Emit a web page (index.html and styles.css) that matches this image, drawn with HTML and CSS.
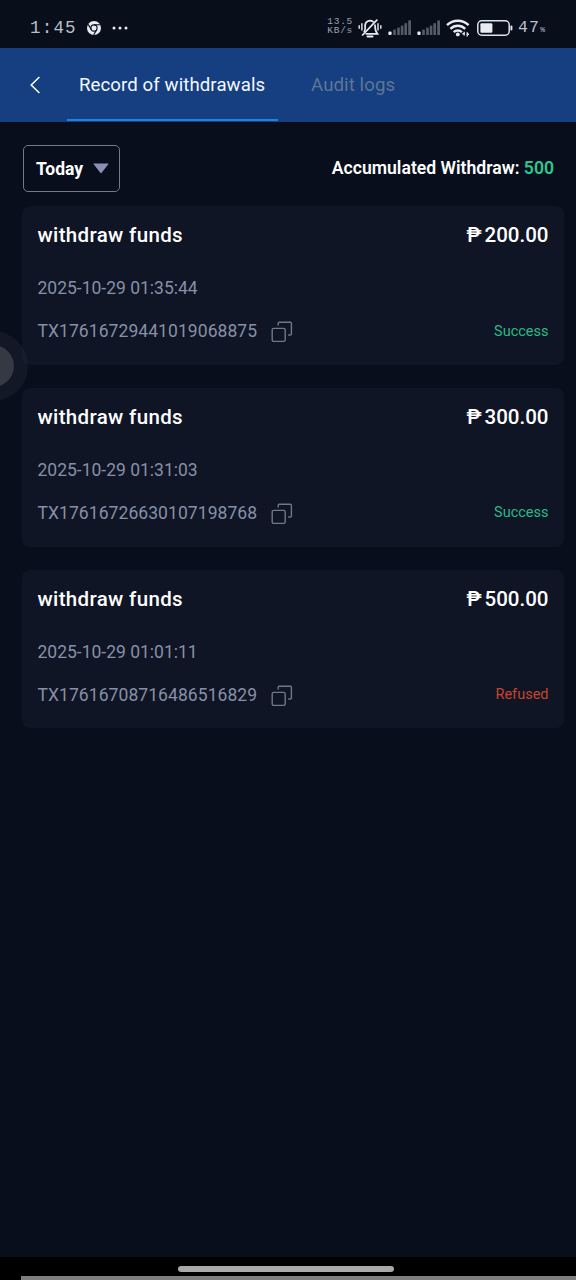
FILE: index.html
```html
<!DOCTYPE html>
<html lang="en">
<head>
<meta charset="utf-8">
<meta name="viewport" content="width=device-width, initial-scale=1">
<title>Record of withdrawals</title>
<link rel="stylesheet" href="styles.css">
</head>
<body>
<svg class="defs" aria-hidden="true">
  <symbol id="copy" viewBox="0 0 22 22"><g fill="none" stroke="currentColor" stroke-width="1.4"><rect x="1.2" y="7.4" width="13" height="13" rx="1.4"/><path d="M7.2 4.6V2.2a1 1 0 0 1 1-1H19.4a1 1 0 0 1 1 1V13a1 1 0 0 1-1 1H17.2"/></g></symbol>
  <symbol id="signal" viewBox="0 0 24 16"><rect x="0.4" y="11.4" width="3.2" height="3.6" rx="1" fill="#e8ebf2"/><g fill="#555b68"><rect x="5.2" y="9.6" width="2.6" height="5.4"/><rect x="9.2" y="7.6" width="2.6" height="7.4"/><rect x="12.8" y="5.6" width="2.6" height="9.4"/><rect x="16.4" y="3.2" width="2.6" height="11.8"/><rect x="20.2" y="0.4" width="2.8" height="14.6"/></g></symbol>
</svg>
<div class="phone">
  <header class="status">
    <div class="status-left">
      <span class="clock">1:45</span>
      <svg class="chrome" viewBox="0 0 14 14"><circle cx="7" cy="7" r="7" fill="#e8ebf2"/><circle cx="7" cy="7" r="3.1" fill="none" stroke="#090e1b" stroke-width="1.1"/><path d="M7 3.8H13.2M4.3 8.6 1.2 3.4M9.8 8.6 6.7 13.8" stroke="#090e1b" stroke-width="1.1"/></svg>
      <svg class="dots" viewBox="0 0 16 4" fill="#e8ebf2"><circle cx="2" cy="2" r="1.5"/><circle cx="8" cy="2" r="1.5"/><circle cx="14" cy="2" r="1.5"/></svg>
    </div>
    <div class="status-right">
      <div class="speed"><span>13.5</span><span>KB/s</span></div>
      <svg class="bell" viewBox="0 0 24 20" fill="none" stroke="#e8ebf2" stroke-width="1.7" stroke-linecap="round"><path d="M6.2 13.6C7.6 12 7.1 10.6 7.1 8a5 5 0 0 1 8-4.3M17 7.2c0 3.4-.1 5.6 2.4 8.6H8.2"/><path d="M4.6 17 18.8 2.2"/><path d="M9.5 18.4h5" stroke-width="2"/><path d="M1.2 7.8v2.4M3.9 5.8v6.2M20 5.8v6.2M22.8 7.8v2.4" stroke-width="1.4"/></svg>
      <svg class="signal"><use href="#signal"/></svg>
      <svg class="signal second"><use href="#signal"/></svg>
      <svg class="wifi" viewBox="0 0 24 18" fill="none" stroke="#e8ebf2" stroke-width="2.4"><path d="M1 6.2a15.5 15.5 0 0 1 21.6 0M4.4 9.8a10.6 10.6 0 0 1 14.8 0M7.7 13.2a5.8 5.8 0 0 1 8.2 0"/><circle cx="11.8" cy="15.4" r="1.9" fill="#e8ebf2" stroke="none"/><path d="M18.2 12.8v3.6M21.2 13.2v4.4" stroke-width="1.3"/><path d="M16.4 14.8h1.8M21.2 15.2h1.8" stroke-width="1.4"/></svg>
      <svg class="battery" viewBox="0 0 36 16"><rect x="0.8" y="0.8" width="31.4" height="14.4" rx="4" fill="none" stroke="#dfe3ec" stroke-width="1.5"/><rect x="3.4" y="3.2" width="12" height="9.6" rx="1" fill="#e8ebf2"/><rect x="33.4" y="5.4" width="2" height="5.2" rx="1" fill="#dfe3ec"/></svg>
      <span class="percent">47<small>%</small></span>
    </div>
  </header>

  <nav class="tabs">
    <svg class="back" viewBox="0 0 10 18" fill="none" stroke="#fff" stroke-width="1.5"><path d="M9.4 1 1.2 9l8.2 8"/></svg>
    <span class="tab active">Record of withdrawals</span>
    <span class="tab">Audit logs</span>
  </nav>

  <section class="filter">
    <div class="select"><span>Today</span><svg viewBox="0 0 16 11"><path d="M.9.4h14.2q.8 0 .4.7L8.7 9.8q-.7.9-1.4 0L.5 1.1Q.1.4.9.4Z" fill="#8b90b0"/></svg></div>
    <div class="total">Accumulated Withdraw: <b>500</b></div>
  </section>

  <main class="list">
    <article class="card">
      <div class="row title"><span class="name">withdraw funds</span><span class="amount"><i>₱</i>200.00</span></div>
      <div class="date">2025-10-29 01:35:44</div>
      <div class="row"><span class="tx">TX17616729441019068875<svg><use href="#copy"/></svg></span><span class="state">Success</span></div>
    </article>
    <article class="card">
      <div class="row title"><span class="name">withdraw funds</span><span class="amount"><i>₱</i>300.00</span></div>
      <div class="date">2025-10-29 01:31:03</div>
      <div class="row"><span class="tx">TX17616726630107198768<svg><use href="#copy"/></svg></span><span class="state">Success</span></div>
    </article>
    <article class="card">
      <div class="row title"><span class="name">withdraw funds</span><span class="amount"><i>₱</i>500.00</span></div>
      <div class="date">2025-10-29 01:01:11</div>
      <div class="row"><span class="tx">TX17616708716486516829<svg><use href="#copy"/></svg></span><span class="state refused">Refused</span></div>
    </article>
  </main>

  <footer class="gesture"><div class="pill"></div><div class="edge"></div></footer>
  <div class="assist"><div></div></div>
</div>
</body>
</html>
```
FILE: styles.css
```css
* { box-sizing: border-box; }
body { margin: 0; background: #080e1c; font-family: Roboto, "Liberation Sans", sans-serif; color: #fff; }
.defs { position: absolute; width: 0; height: 0; }
.phone { position: relative; width: 576px; height: 1280px; overflow: hidden; display: flex; flex-direction: column; }

.status { height: 48px; background: #090e1b; display: flex; justify-content: space-between; padding: 7px 31px 0 30px; }
.status-left, .status-right { display: flex; align-items: center; height: 41px; }
.clock, .percent { font-family: "Liberation Mono", monospace; font-size: 17.5px; letter-spacing: 1.2px; color: #b9bfcc; line-height: 20px; }
.chrome { width: 14px; height: 14px; margin-left: 10px; }
.dots { width: 16px; height: 4px; margin-left: 11px; }
.speed { display: flex; flex-direction: column; font: 9.5px/9.5px "Liberation Mono", monospace; letter-spacing: .7px; color: #9aa0ad; margin-top: -3px; }
.bell { width: 24px; height: 20px; margin-left: 5px; }
.signal { width: 24px; height: 16px; margin-left: 6px; }
.signal.second { margin-left: 5px; }
.wifi { width: 24px; height: 18px; margin-left: 5px; }
.battery { width: 36px; height: 16px; margin-left: 7px; }
.percent { margin: 2px 0 0 5px; font-size: 16.5px; }
.percent small { font-size: 8px; letter-spacing: 0; }

.tabs { height: 74px; background: #153f81; display: flex; align-items: stretch; padding-left: 30px; }
.back { width: 10px; height: 18px; margin: 28px 27px 0 0; }
.tab { font-size: 18.6px; line-height: 74px; height: 74px; padding: 0 12px; color: #5f7593; letter-spacing: .1px; margin-right: 21px; }
.tab.active { color: #f4f8ff; width: 211px; white-space: nowrap; background: linear-gradient(#1c83de, #1c83de) 0 71px / 100% 2px no-repeat; }

.filter { height: 84px; padding: 23px 22px 0 23px; display: flex; justify-content: space-between; align-items: flex-start; }
.select { width: 97px; height: 47px; border: 1px solid #747988; border-radius: 5px; display: flex; align-items: center; justify-content: space-between; padding: 0 10px 0 12px; font-weight: 700; font-size: 17.5px; }
.select svg { width: 16px; height: 11px; }
.total { font-size: 17.6px; font-weight: 600; line-height: 47px; }
.total b { font-weight: 600; color: #2cc692; }

.list { padding: 0 12px 0 22px; display: flex; flex-direction: column; gap: 23px; flex: 1; }
.card { height: 158.8px; background: #0f1525; border-radius: 8px; padding: 14px 15.5px 0; }
.row { display: flex; justify-content: space-between; align-items: center; height: 30px; }
.title { font-size: 20.5px; font-weight: 500; }
.name { letter-spacing: .35px; }
.amount { display: flex; }
.amount i { font-style: normal; margin-right: 3px; }
.date { margin-top: 23px; height: 30px; line-height: 30px; font-size: 17.5px; color: #8790a6; }
.date + .row { margin-top: 13px; }
.tx { display: flex; align-items: center; font-size: 17.5px; letter-spacing: .07px; color: #8790a6; }
.tx svg { width: 22px; height: 22px; margin: 2px 0 0 14px; color: #707787; }
.state { font-size: 14.5px; color: #2bb985; }
.state.refused { color: #c6442f; }

.gesture { height: 23px; background: #000; display: flex; flex-direction: column; align-items: center; justify-content: space-between; padding-top: 9px; }
.pill { width: 216px; height: 6px; border-radius: 3px; background: #a9a9a7; margin-right: 4px; }
.edge { width: 555px; height: 4px; background: #7e7e7e; align-self: flex-end; }

.assist { position: absolute; left: -42px; top: 331px; width: 70px; height: 70px; border-radius: 50%; background: rgba(40, 48, 60, .32); padding: 14px; }
.assist div { width: 42px; height: 42px; border-radius: 50%; background: #343944; }
```
